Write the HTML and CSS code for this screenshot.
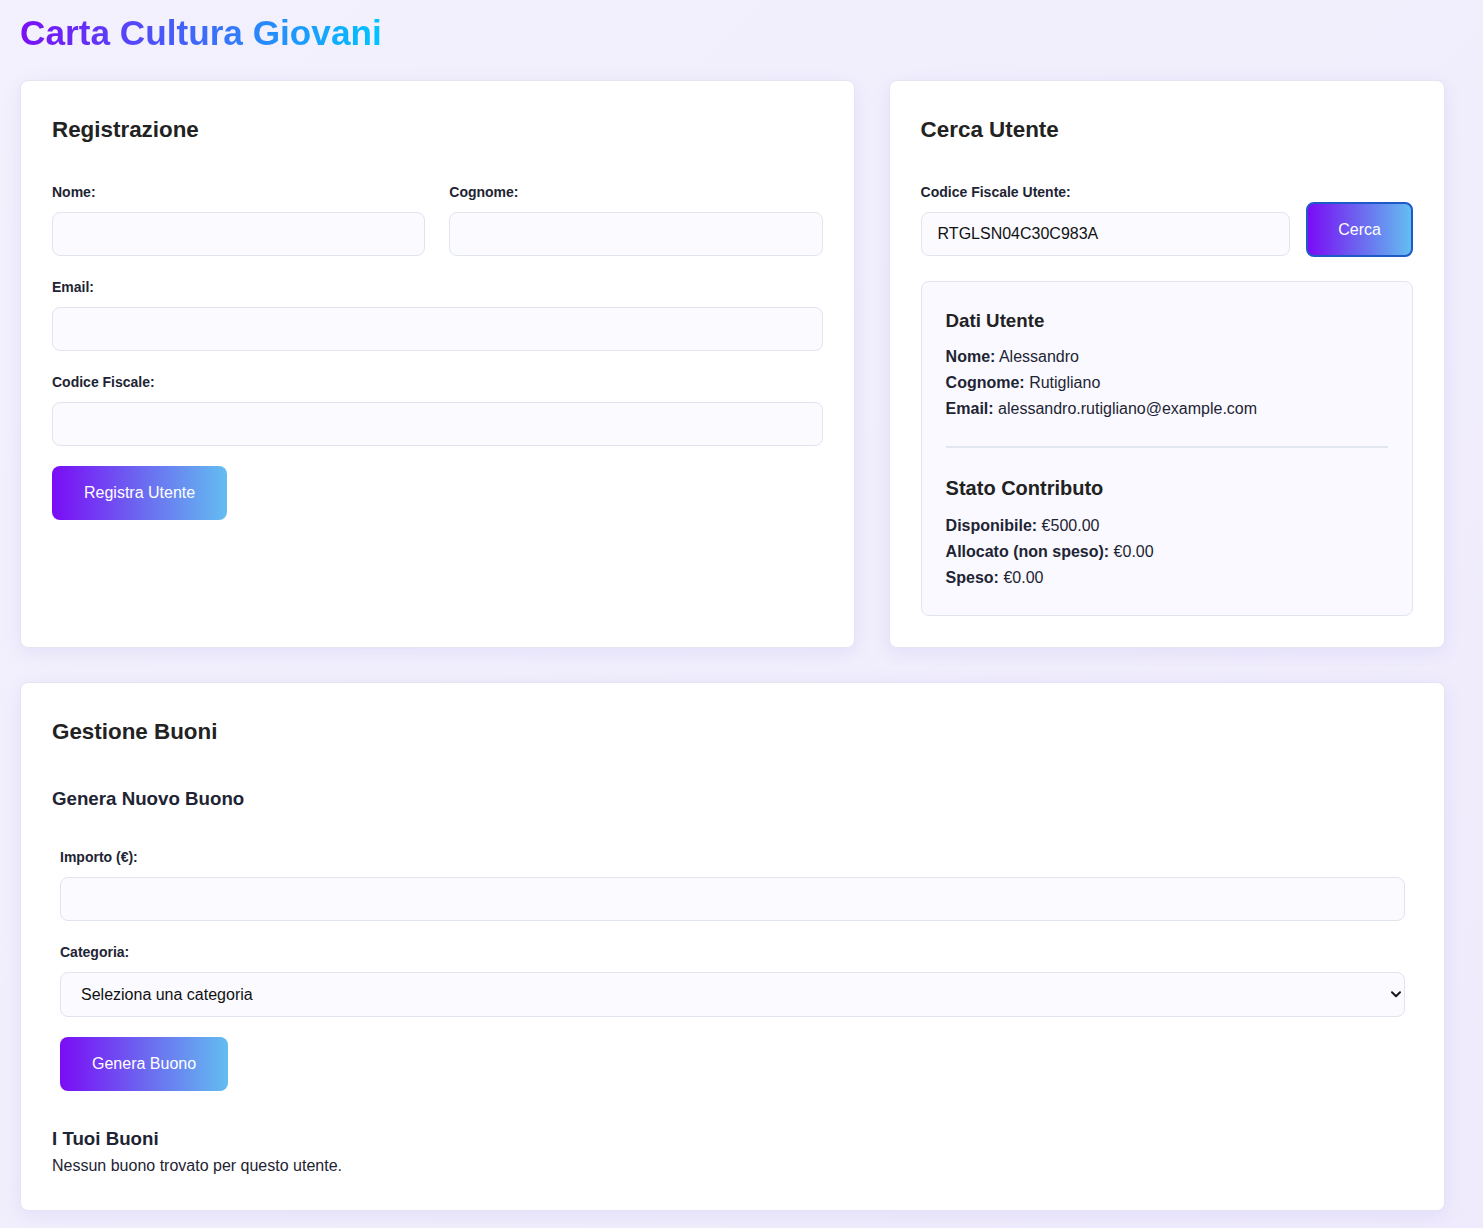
FILE: index.html
```html
<!DOCTYPE html>
<html lang="it">
<head>
<meta charset="utf-8">
<title>Carta Cultura Giovani</title>
<link rel="stylesheet" href="styles.css">
</head>
<body>
<div class="container">
  <h1 class="title">Carta Cultura Giovani</h1>

  <div class="top-grid">
    <section class="card">
      <h2 class="card-title">Registrazione</h2>
      <form class="form">
        <div class="row-2 group">
          <div>
            <label class="label">Nome:</label>
            <input class="input" type="text">
          </div>
          <div>
            <label class="label">Cognome:</label>
            <input class="input" type="text">
          </div>
        </div>
        <div class="group">
          <label class="label">Email:</label>
          <input class="input" type="email">
        </div>
        <div class="group group-last">
          <label class="label">Codice Fiscale:</label>
          <input class="input" type="text">
        </div>
        <button type="button" class="btn">Registra Utente</button>
      </form>
    </section>

    <section class="card">
      <h2 class="card-title">Cerca Utente</h2>
      <div class="search-row">
        <div class="search-field">
          <label class="label">Codice Fiscale Utente:</label>
          <input class="input input-filled" type="text" value="RTGLSN04C30C983A">
        </div>
        <button type="button" class="btn btn-search">Cerca</button>
      </div>
      <div class="user-box">
        <h3 class="box-title">Dati Utente</h3>
        <p class="line"><strong>Nome:</strong> Alessandro</p>
        <p class="line"><strong>Cognome:</strong> Rutigliano</p>
        <p class="line"><strong>Email:</strong> alessandro.rutigliano@example.com</p>
        <hr class="divider">
        <h3 class="box-title-lg">Stato Contributo</h3>
        <p class="line"><strong>Disponibile:</strong> €500.00</p>
        <p class="line"><strong>Allocato (non speso):</strong> €0.00</p>
        <p class="line"><strong>Speso:</strong> €0.00</p>
      </div>
    </section>
  </div>

  <section class="card card-wide">
    <h2 class="card-title">Gestione Buoni</h2>
    <h3 class="sub-title">Genera Nuovo Buono</h3>
    <form class="voucher-form">
      <div class="group">
        <label class="label">Importo (€):</label>
        <input class="input" type="number">
      </div>
      <div class="group group-last">
        <label class="label">Categoria:</label>
        <div class="select-wrap">
          <select class="select">
            <option>Seleziona una categoria</option>
          </select>
          <svg class="chevron" width="10" height="7" viewBox="0 0 10 7"><path d="M1 1.2 L5 5.2 L9 1.2" fill="none" stroke="#1a1a1a" stroke-width="2" stroke-linecap="round" stroke-linejoin="round"/></svg>
        </div>
      </div>
      <button type="button" class="btn">Genera Buono</button>
    </form>
    <h3 class="list-title">I Tuoi Buoni</h3>
    <p class="empty">Nessun buono trovato per questo utente.</p>
  </section>
</div>
</body>
</html>
```

FILE: styles.css
```css
* { box-sizing: border-box; }

html, body {
  margin: 0;
  padding: 0;
}

body {
  font-family: "Liberation Sans", Arial, Helvetica, sans-serif;
  background: linear-gradient(135deg, #f3f1fd 0%, #efebfc 100%);
  color: #1e2433;
  min-height: 1228px;
}

.container {
  width: 1425px;
  margin-left: 20px;
  padding-top: 12px;
  padding-bottom: 18px;
}

.title {
  margin: 0 0 27px;
  font-size: 35.2px;
  line-height: 41px;
  font-weight: 700;
  display: inline-block;
  background: linear-gradient(90deg, #7b0ff5 0%, #00c4ff 100%);
  -webkit-background-clip: text;
  background-clip: text;
  color: transparent;
}

.top-grid {
  display: grid;
  grid-template-columns: 3fr 2fr;
  gap: 34px;
}

.card {
  background: #ffffff;
  border: 1px solid #e6e4f4;
  border-radius: 8px;
  padding: 31px;
  box-shadow: 0 4px 18px rgba(110, 90, 220, 0.10);
}

.card-wide {
  margin-top: 34px;
}

.card-title {
  margin: 0 0 37px;
  font-size: 22.4px;
  line-height: 35px;
  font-weight: 700;
  color: #222222;
}

.card-wide .card-title {
  margin-bottom: 36px;
}

.label {
  display: block;
  font-size: 14px;
  line-height: 16px;
  font-weight: 700;
  color: #1e2433;
  margin-bottom: 12px;
}

.group {
  margin-bottom: 23px;
}

.group-last {
  margin-bottom: 20px;
}

.row-2 {
  display: grid;
  grid-template-columns: 1fr 1fr;
  gap: 24px;
}

.input,
.select {
  display: block;
  width: 100%;
  height: 44px;
  border: 1px solid #dfe4ee;
  border-radius: 8px;
  background: #fbfbff;
  font-family: "Liberation Sans", Arial, sans-serif;
  font-size: 16px;
  color: #111111;
  padding: 0 16px;
  outline: none;
}

.select {
  height: 45px;
  padding: 0 20px;
  -webkit-appearance: none;
  appearance: none;
}

.select-wrap {
  position: relative;
}

.chevron {
  position: absolute;
  right: 4px;
  top: 19px;
  pointer-events: none;
}

.btn {
  display: inline-block;
  height: 54px;
  padding: 0 32px;
  border: none;
  border-radius: 8px;
  background: linear-gradient(90deg, #7a0cf6 0%, #6c67f0 50%, #63bdf1 100%);
  color: #ffffff;
  font-family: "Liberation Sans", Arial, sans-serif;
  font-size: 16px;
  cursor: pointer;
}

.search-row {
  display: flex;
  align-items: flex-end;
  gap: 16px;
}

.search-field {
  flex: 1;
}

.btn-search {
  height: 55px;
  padding: 0 30px;
  border: 2px solid #1d5ac8;
  margin-bottom: -1px;
}

.user-box {
  margin-top: 25px;
  background: #f9f9ff;
  border: 1px solid #e1e5ee;
  border-radius: 8px;
  padding: 24px;
}

.box-title {
  margin: 0 0 9px;
  font-size: 18.72px;
  line-height: 29px;
  font-weight: 700;
  color: #222222;
}

.box-title-lg {
  margin: 0 0 9px;
  font-size: 20px;
  line-height: 32px;
  font-weight: 700;
  color: #222222;
}

.line {
  margin: 0;
  font-size: 16px;
  line-height: 26px;
  color: #1e2433;
}

.line strong {
  font-weight: 700;
}

.divider {
  border: none;
  border-top: 2px solid #e2e6ee;
  margin: 24px 0;
  height: 0;
}

.sub-title {
  margin: 0 0 28px;
  font-size: 18.72px;
  line-height: 28px;
  font-weight: 700;
  color: #1e2433;
}

.voucher-form {
  padding: 8px;
}

.list-title {
  margin: 26px 0 0;
  font-size: 18.72px;
  line-height: 28px;
  font-weight: 700;
  color: #1e2433;
}

.empty {
  margin: 0;
  font-size: 16px;
  line-height: 26px;
  color: #1e2433;
}
```
